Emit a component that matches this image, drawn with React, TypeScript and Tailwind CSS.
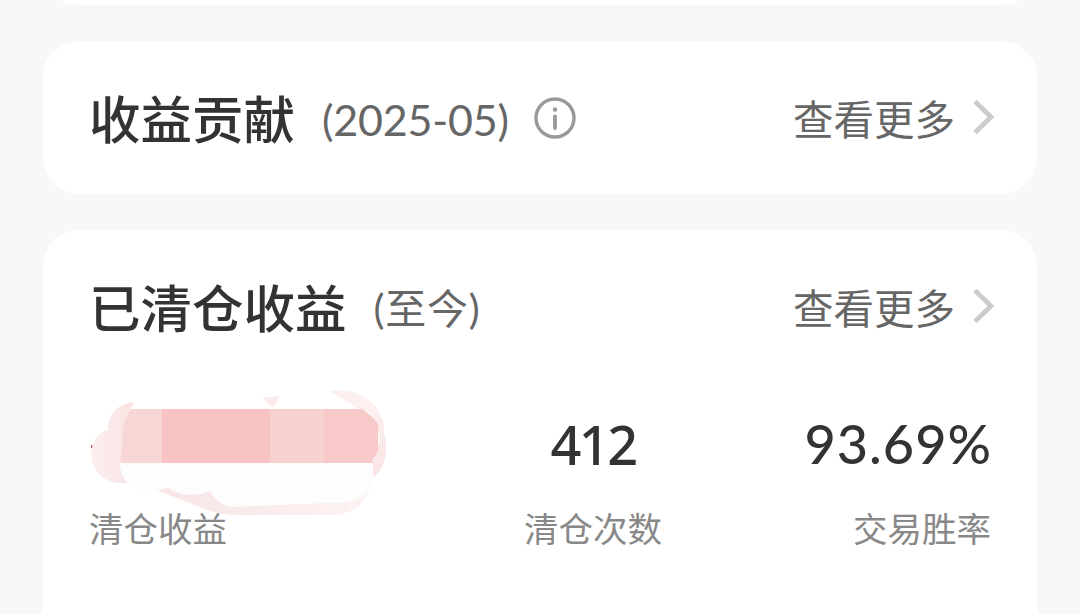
import React from 'react';

interface CardHeaderProps {
  title: string;
  children: React.ReactNode;
}

const CardHeader: React.FC<CardHeaderProps> = ({ title, children }) => {
  return (
    <div className="flex h-[76px] items-center justify-between">
      <div className="flex items-center">
        <h2 className="-mt-[3px] text-[51.5px] leading-[76px] font-medium text-[#333333]">{title}</h2>
        {children}
      </div>
      <button className="flex items-center text-[#666666]">
        <span className="-mt-px text-[40.5px] leading-[76px]">查看更多</span>
        <svg className="-mt-0.5 ml-[18px] h-9 w-[22px]" viewBox="0 0 22 36" fill="none">
          <path d="M2 2.5L18 18L2 33.5" stroke="#cccccc" strokeWidth="4.8" />
        </svg>
      </button>
    </div>
  );
};

const InfoIcon: React.FC = () => (
  <svg className="-mt-px ml-[25px] h-[42px] w-[42px]" viewBox="0 0 42 42" fill="none">
    <circle cx="21" cy="21" r="19" stroke="#999999" strokeWidth="3.4" />
    <circle cx="21" cy="12.5" r="2.2" fill="#999999" />
    <path d="M21 19.5V31" stroke="#999999" strokeWidth="3.8" strokeLinecap="round" />
  </svg>
);

// Brushed mosaic that covers the amount
const HiddenAmount: React.FC = () => (
  <svg className="h-[130px] w-[300px] overflow-visible" viewBox="0 0 300 130" fill="none">
    <defs>
      <linearGradient id="leftBrush" x1="0" y1="0" x2="1" y2="0">
        <stop offset="0" stopColor="#fdefef" />
        <stop offset="0.6" stopColor="#f9e2e2" />
        <stop offset="1" stopColor="#fae5e5" />
      </linearGradient>
      <linearGradient id="bottomBrush" x1="0" y1="0" x2="1" y2="0">
        <stop offset="0" stopColor="#f9e6e6" />
        <stop offset="0.35" stopColor="#f9e9e9" />
        <stop offset="1" stopColor="#fdf3f3" />
      </linearGradient>
      <linearGradient id="rightBrush" x1="0" y1="0" x2="0.6" y2="1">
        <stop offset="0" stopColor="#fdeeee" />
        <stop offset="0.5" stopColor="#fdf1f1" />
        <stop offset="1" stopColor="#fae6e6" />
      </linearGradient>
      <clipPath id="mosaic">
        <path d="M31 24H262Q271 30 278 39V66Q275 72 272 75L273 78H20Q21 68 23 62C20 50 25 34 31 24Z" />
      </clipPath>
    </defs>
    <path
      d="M34 17C18 18 8 30 8 45C-4 48-9 60-9 70C-8 87 6 100 26 98L60 100L62 60L31 24Z"
      fill="url(#leftBrush)"
    />
    <path
      d="M54 104L70 99L110 105C122 117 132 122 150 121L238 117C256 115 266 108 270 103C264 122 249 131 226 130H132C116 129 101 123 87 117L54 104Z"
      fill="url(#bottomBrush)"
    />
    <path
      d="M229 6C258 3 280 16 284 41V48C289 61 286 82 274 93L270 74L279 60C285 40 255 20 229 6Z"
      fill="url(#rightBrush)"
    />
    <path d="M163 13L180 11L174 22Q168 20 163 13Z" fill="#fce9e9" />
    <g clipPath="url(#mosaic)">
      <rect x="0" y="24" width="62" height="54" fill="#f8d6d6" />
      <rect x="62" y="24" width="108" height="54" fill="#f7c3c3" />
      <rect x="170" y="24" width="54" height="54" fill="#f8d2d1" />
      <rect x="224" y="24" width="60" height="54" fill="#f7c9c9" />
    </g>
    <path
      d="M20 78H273V93C271 108 258 116 241 118L224 118L132 122C122 121 114 114 110 106C97 112 76 111 68 102C46 112 20 104 20 78Z"
      fill="#fdfdfd"
    />
    <rect x="-9" y="60" width="1.2" height="3" fill="#b44d5c" />
  </svg>
);

const labelClass = 'text-[34.5px] leading-[48px] text-[#888888]';
const valueClass = 'text-[54px] leading-[72px] font-medium text-[#333333]';

export default function App() {
  return (
    <div className="h-[614px] w-[1080px] overflow-hidden bg-[#f6f8fa] px-[43px] font-['Noto_Sans_CJK_SC',sans-serif]">
      <div className="h-[5px] overflow-hidden">
        <div className="-mt-[75px] h-20 rounded-[36px] bg-white" />
      </div>

      <section className="mt-9 h-[153px] rounded-[36px] bg-white pt-[39px] pr-[42px] pl-[46px]">
        <CardHeader title="收益贡献">
          <span className="mt-[3px] ml-[27px] font-['Lato',sans-serif] text-[43px] leading-[76px] tracking-[-0.2px] text-[#666666]">
            (2025-05)
          </span>
          <InfoIcon />
        </CardHeader>
      </section>

      <section className="mt-9 h-[420px] rounded-[36px] bg-white pt-[39px] pr-[42px] pl-[46px]">
        <CardHeader title="已清仓收益">
          <span className="mt-[3px] ml-[27px] font-['Lato','Noto_Sans_CJK_SC',sans-serif] text-[41px] leading-[76px] tracking-[0.8px] text-[#666666]">
            (至今)
          </span>
        </CardHeader>

        <div className="mt-[63px] grid h-[140px] grid-cols-3 pr-1">
          <div className="relative flex flex-col">
            <div className="absolute -top-[23px] left-[11px]">
              <HiddenAmount />
            </div>
            <div className="h-[72px]" />
            <span className={`relative mt-[23px] ${labelClass}`}>清仓收益</span>
          </div>
          <div className="ml-[106px] flex flex-col items-center">
            <span className={`font-['Noto_Sans',sans-serif] tracking-[-2.5px] ${valueClass}`}>412</span>
            <span className={`mt-[23px] ${labelClass}`}>清仓次数</span>
          </div>
          <div className="flex flex-col items-end">
            <span className={`-mr-px font-['Lato',sans-serif] tracking-[1px] ${valueClass}`}>93.69%</span>
            <span className={`mt-[23px] ${labelClass}`}>交易胜率</span>
          </div>
        </div>
      </section>
    </div>
  );
}
